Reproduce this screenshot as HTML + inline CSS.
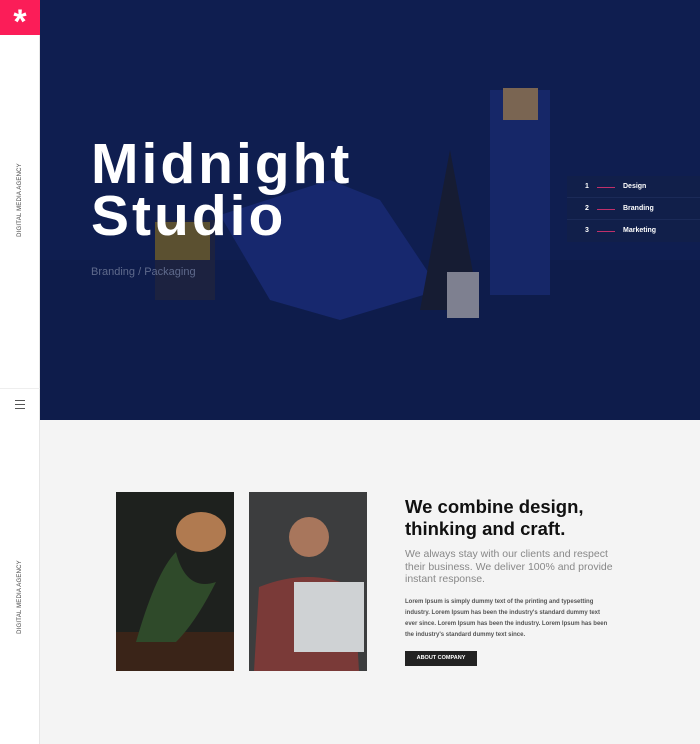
<!DOCTYPE html>
<html><head><style>
*{margin:0;padding:0;box-sizing:border-box}
body{width:700px;height:744px;overflow:hidden;background:#f4f4f4;font-family:"Liberation Sans",sans-serif;position:relative}
.side{position:absolute;left:0;top:0;width:40px;height:744px;background:#fff;border-right:1px solid #e6e6e6}
.logo{position:absolute;left:0;top:0;width:40px;height:35px;background:#fb1d58;color:#fff;font-size:34px;font-weight:bold;text-align:center;line-height:44px}
.vt{position:absolute;font-size:6px;color:#444;letter-spacing:.2px;transform:rotate(-90deg);transform-origin:center;white-space:nowrap;width:100px;text-align:center}
.hero{position:absolute;left:40px;top:0;width:660px;height:420px;background:#0f1e50;overflow:hidden}
.h1{position:absolute;left:51px;top:138px;color:#fff;font-size:57px;font-weight:bold;line-height:52px;letter-spacing:3px}
.sub{position:absolute;left:51px;top:266px;color:#5f6a8c;font-size:11px}
.menu{position:absolute;left:527px;top:176px;width:133px;height:66px;background:#111f4a}
.menu div{height:22px;border-bottom:1px solid #1b2a58;color:#fff;font-size:7px;font-weight:bold;line-height:22px;position:relative}
.menu span.n{position:absolute;left:18px}
.menu span.l{position:absolute;left:30px;top:11px;width:18px;height:1px;background:#c0306a}
.menu span.t{position:absolute;left:56px}
h2{position:absolute;left:405px;top:496px;font-size:18.5px;line-height:22px;color:#111;font-weight:bold}
.p1{position:absolute;left:405px;top:548px;width:210px;font-size:10.5px;line-height:12.5px;color:#888}
.p2{position:absolute;left:405px;top:597px;width:205px;font-size:6px;line-height:11px;color:#555;font-weight:bold}
.btn{position:absolute;left:405px;top:651px;width:72px;height:15px;background:#222;color:#fff;font-size:5.5px;font-weight:bold;text-align:center;line-height:15px}
</style></head><body>
<div class="side">
<div class="logo">*</div>
<div class="vt" style="left:-30px;top:197px">DIGITAL MEDIA AGENCY</div>
<div style="position:absolute;left:0;top:388px;width:40px;height:1px;background:#eee"></div>
<div style="position:absolute;left:15px;top:400px;width:10px;height:1px;background:#555;box-shadow:0 4px 0 #555,0 8px 0 #555"></div>
<div class="vt" style="left:-30px;top:594px">DIGITAL MEDIA AGENCY</div>
</div>
<div class="hero">
<svg width="660" height="420" style="position:absolute;left:0;top:0">
<rect x="0" y="260" width="660" height="160" fill="#0e1c4b"/>
<rect x="115" y="220" width="60" height="80" fill="#1c2240"/>
<rect x="115" y="222" width="55" height="38" fill="#5b5030"/>
<polygon points="180,215 290,180 340,200 400,290 300,320 230,300" fill="#17286e"/>
<polygon points="380,310 410,150 440,310" fill="#161c33"/>
<rect x="407" y="272" width="32" height="46" fill="#7e8090"/>
<rect x="450" y="90" width="60" height="205" fill="#162768"/>
<rect x="463" y="88" width="35" height="32" fill="#7a6552"/>
</svg>
<div class="h1">Midnight<br>Studio</div>
<div class="sub">Branding / Packaging</div>
<div class="menu">
<div><span class="n">1</span><span class="l"></span><span class="t">Design</span></div>
<div><span class="n">2</span><span class="l"></span><span class="t">Branding</span></div>
<div style="border:0"><span class="n">3</span><span class="l"></span><span class="t">Marketing</span></div>
</div>
</div>
<svg style="position:absolute;left:116px;top:492px" width="118" height="179">
<rect width="118" height="179" fill="#1e211e"/>
<rect y="140" width="118" height="39" fill="#3a2418"/>
<ellipse cx="85" cy="40" rx="25" ry="20" fill="#b07a50"/>
<path d="M20 150 Q40 80 60 60 Q70 100 100 90 Q80 130 60 150Z" fill="#2f4a2a"/>
</svg>
<svg style="position:absolute;left:249px;top:492px" width="118" height="179">
<rect width="118" height="179" fill="#3c3d3e"/>
<circle cx="60" cy="45" r="20" fill="#a8765c"/>
<path d="M5 179 L10 95 Q60 75 105 95 L110 179Z" fill="#7a3a38"/>
<rect x="45" y="90" width="70" height="70" fill="#cfd2d4"/>
</svg>
<h2>We combine design,<br>thinking and craft.</h2>
<div class="p1">We always stay with our clients and respect their business. We deliver 100% and provide instant response.</div>
<div class="p2">Lorem Ipsum is simply dummy text of the printing and typesetting industry. Lorem Ipsum has been the industry's standard dummy text ever since. Lorem Ipsum has been the industry. Lorem Ipsum has been the industry's standard dummy text since.</div>
<div class="btn">ABOUT COMPANY</div>
</body></html>
